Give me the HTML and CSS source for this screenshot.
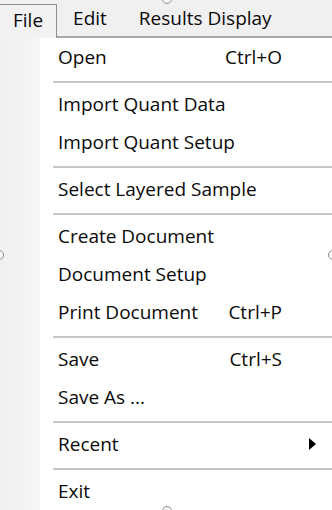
FILE: index.html
```html
<!DOCTYPE html>
<html lang="en">
<head>
    <meta charset="UTF-8">
    <title>File Menu</title>
    <link rel="stylesheet" href="styles.css">
</head>
<body>
    <div class="window">
        <div class="menubar">
            <div class="menubar-item active">File</div>
            <div class="menubar-item edit">Edit</div>
            <div class="menubar-item">Results Display</div>
        </div>
        <div class="dropdown">
            <div class="menu-item"><span class="label">Open</span><span class="shortcut">Ctrl+O</span></div>
            <div class="separator"></div>
            <div class="menu-item"><span class="label">Import Quant Data</span></div>
            <div class="menu-item"><span class="label">Import Quant Setup</span></div>
            <div class="separator"></div>
            <div class="menu-item"><span class="label">Select Layered Sample</span></div>
            <div class="separator"></div>
            <div class="menu-item"><span class="label">Create Document</span></div>
            <div class="menu-item"><span class="label">Document Setup</span></div>
            <div class="menu-item"><span class="label">Print Document</span><span class="shortcut">Ctrl+P</span></div>
            <div class="separator"></div>
            <div class="menu-item"><span class="label">Save</span><span class="shortcut">Ctrl+S</span></div>
            <div class="menu-item"><span class="label">Save As ...</span></div>
            <div class="separator"></div>
            <div class="menu-item"><span class="label">Recent</span><span class="shortcut"></span><span class="arrow"></span></div>
            <div class="separator"></div>
            <div class="menu-item"><span class="label">Exit</span></div>
        </div>

        <!-- designer selection handles -->
        <div class="handle handle-top"></div>
        <div class="handle handle-left"></div>
        <div class="handle handle-right"></div>
        <div class="handle handle-bottom"></div>
    </div>
</body>
</html>
```

FILE: styles.css
```css
html, body {
    margin: 0;
    height: 100%;
    background: #fff;
}
.window {
    position: relative;
    width: 332px;
    height: 510px;
    overflow: hidden;
    font-family: "Open Sans", "Noto Sans", sans-serif;
    font-size: 19px;
    color: #0a0a0a;
}
.menubar {
    display: flex;
    height: 36px;
    background: #f0f0f0;
    border-bottom: 2px solid #a9a9a9;
}
.menubar-item {
    display: flex;
    align-items: center;
    padding: 0 16px;
    line-height: 1;
}
.menubar-item.active {
    padding: 0 13px;
    margin-top: 4px;
    margin-bottom: -2px;
    border-top: 1px solid #8e8e8e;
    border-right: 1px solid #8e8e8e;
    background: #f2f2f2;
    padding-bottom: 2px;
}
.dropdown {
    background: linear-gradient(to right, #f0f0f0 0, #f6f6f6 40px, #fff 40px);
    height: 100%;
}
.menu-item {
    box-sizing: border-box;
    display: grid;
    grid-template-columns: 1fr auto 34px;
    align-items: center;
    height: 38px;
    padding: 0 16px 0 58px;
    white-space: nowrap;
}
.shortcut {
    text-align: right;
}
.arrow {
    justify-self: end;
    width: 0;
    height: 0;
    border-top: 6px solid transparent;
    border-bottom: 6px solid transparent;
    border-left: 7px solid #000;
}
.separator {
    margin: 5px 0 2px 53px;
    border-top: 2px solid #c6c6c6;
}
.handle {
    position: absolute;
    width: 8px;
    height: 8px;
    border: 1px solid #8c8c8c;
    border-radius: 50%;
    background: #fafafa;
}
.handle-top { left: 162px; top: -6px; }
.handle-left { left: -6px; top: 250px; }
.handle-right { left: 328px; top: 250px; }
.handle-bottom { left: 162px; top: 506px; }
```
